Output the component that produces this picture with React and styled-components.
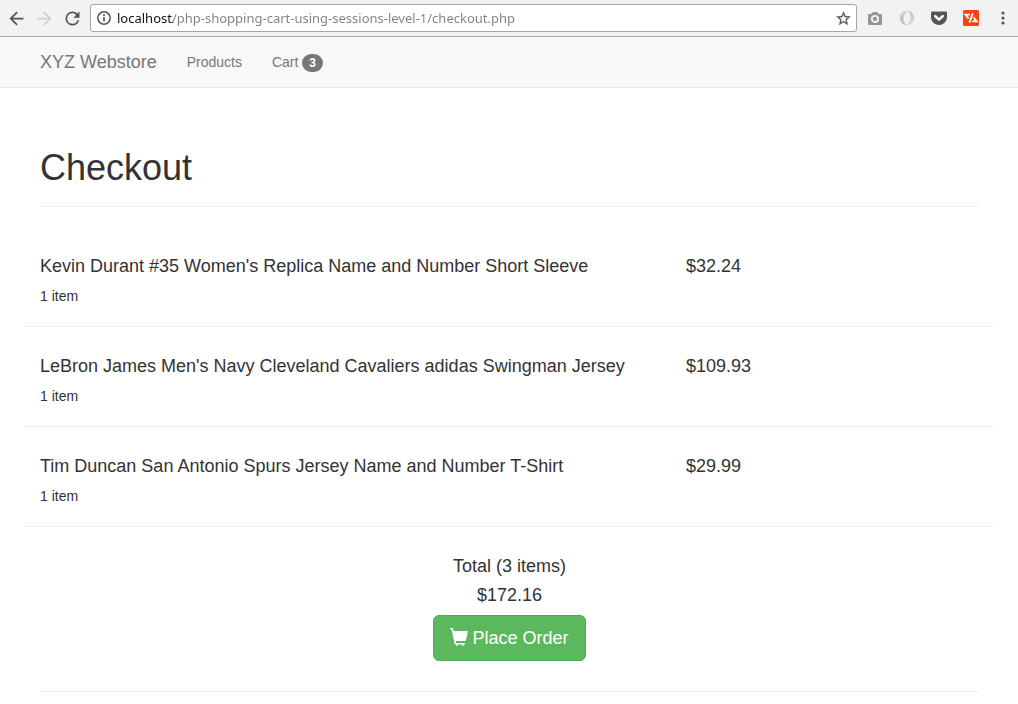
import React from "react";
import styled, { createGlobalStyle } from "styled-components";

const GlobalStyle = createGlobalStyle`
  * { box-sizing: border-box; }
  body {
    margin: 0;
    background: #fff;
    color: #333;
    font: 14px/20px "Liberation Sans", Arial, sans-serif;
  }
`;

const Toolbar = styled.div`
  display: flex;
  align-items: center;
  height: 37px;
  padding-left: 2px;
  background: #f2f2f2;
  border-bottom: 1px solid #a9a9a9;
`;

const ToolButton = styled.button`
  display: flex;
  align-items: center;
  justify-content: center;
  flex: none;
  width: ${(p) => p.$width}px;
  height: 28px;
  padding: 0;
  border: 0;
  background: none;
  color: ${(p) => p.$color || "#555"};
`;

const AddressBar = styled.div`
  display: flex;
  align-items: center;
  gap: 6px;
  flex: 1;
  min-width: 0;
  height: 28px;
  margin: 0 2px 0 4px;
  padding-left: 6px;
  background: #fff;
  border: 1px solid #a6a6a6;
  border-radius: 3px;
  color: #555;
`;

const AddressInput = styled.input`
  flex: 1;
  min-width: 0;
  height: 20px;
  padding: 0;
  border: 0;
  outline: 0;
  font: 13px/20px "Noto Sans", "Open Sans", sans-serif;
  color: #808080;
  background: linear-gradient(90deg, #111 56px, #808080 56px);
  background-clip: text;
  -webkit-background-clip: text;
  -webkit-text-fill-color: transparent;
`;

const Navbar = styled.nav`
  height: 51px;
  padding: 0 24px 0 25px;
  background: #f8f8f8;
  border-bottom: 1px solid #e7e7e7;
  display: flex;
`;

const NavLink = styled.a`
  padding: 15px;
  color: #777;
  text-decoration: none;
  font-size: ${(p) => (p.$brand ? 18 : 14)}px;
  line-height: 20px;
`;

const Badge = styled.span`
  display: inline-block;
  min-width: 10px;
  padding: 3px 7px;
  border-radius: 10px;
  background: #777;
  color: #fff;
  font-size: 12px;
  font-weight: 700;
  line-height: 12px;
  text-align: center;
  vertical-align: middle;
`;

const Container = styled.main`
  padding: 0 24px 0 25px;
`;

const PageHeader = styled.header`
  margin: 60px 15px 20px;
  padding-bottom: 18px;
  border-bottom: 1px solid #eee;
`;

const Title = styled.h1`
  margin: 0;
  font-size: 36px;
  font-weight: 400;
  line-height: 40px;
`;

const ItemList = styled.ul`
  margin: 0;
  padding: 0;
  list-style: none;
`;

const ItemRow = styled.li`
  display: grid;
  grid-template-columns: 2fr 1fr;
  padding: 29px 0 20px;
  border-bottom: 1px solid #eee;
`;

const Cell = styled.div`
  padding: 0 15px;
`;

const Heading = styled.h2`
  margin: 0 0 ${(p) => p.$gap || 10}px;
  font-size: 18px;
  font-weight: 400;
  line-height: 20px;
`;

const Quantity = styled.p`
  margin: 0;
`;

const Summary = styled.section`
  display: flex;
  flex-direction: column;
  align-items: center;
  margin: 0 15px;
  padding: 29px 0 30px;
  border-bottom: 1px solid #eee;
`;

const OrderButton = styled.button`
  display: flex;
  align-items: center;
  gap: 4px;
  padding: 10px 16px;
  border: 1px solid #4cae4c;
  border-radius: 6px;
  background: #5cb85c;
  color: #fff;
  font: 18px/24px "Liberation Sans", Arial, sans-serif;
`;

const Material = ({ d, size = 21, bold = 0 }) => (
  <svg width={size} height={size} viewBox="0 0 24 24" fill="currentColor" stroke="currentColor" strokeWidth={bold} aria-hidden="true">
    <path d={d} />
  </svg>
);

const BACK = "M20 11H7.83l5.59-5.59L12 4l-8 8 8 8 1.41-1.41L7.83 13H20v-2z";
const FORWARD = "M12 4l-1.41 1.41L16.17 11H4v2h12.17l-5.58 5.59L12 20l8-8z";
const RELOAD = "M17.65 6.35A7.96 7.96 0 0 0 12 4a8 8 0 1 0 7.73 10h-2.08A6 6 0 1 1 12 6c1.66 0 3.14.69 4.22 1.78L13 11h7V4l-2.35 2.35z";
const STAR = "M22 9.24l-7.19-.62L12 2 9.19 8.63 2 9.24l5.46 4.73L5.82 21 12 17.27 18.18 21l-1.63-7.03L22 9.24zM12 15.4l-3.76 2.27 1-4.28-3.32-2.88 4.38-.38L12 6.1l1.71 4.04 4.38.38-3.32 2.88 1 4.28L12 15.4z";

const InfoIcon = () => (
  <svg width="14" height="14" viewBox="0 0 14 14" fill="none" aria-hidden="true">
    <circle cx="7" cy="7" r="6.2" stroke="currentColor" strokeWidth="1.5" />
    <path d="M7 6v4.5M7 3.3v1.6" stroke="currentColor" strokeWidth="1.7" />
  </svg>
);

const CameraIcon = () => (
  <svg width="16" height="16" viewBox="0 0 16 16" aria-hidden="true">
    <path fill="#959595" d="M2 4h2.5V3h1V2h5v1h1v1H14a1 1 0 0 1 1 1v9a1 1 0 0 1-1 1H2a1 1 0 0 1-1-1V5a1 1 0 0 1 1-1z" />
    <circle cx="8" cy="9" r="3.1" fill="#959595" stroke="#f4f4f4" strokeWidth="1.9" />
  </svg>
);

const SwirlIcon = () => (
  <svg width="16" height="16" viewBox="0 0 16 16" aria-hidden="true">
    <path fill="#d0d0d0" d="M9 .8C4.500.500.800 3.500.600 7.500c-.200 3.200 1.600 6 4.600 7.300 1 .3 1.800.2 2.300-.100C5.500 12.800 4.600 10.800 4.800 8.300 5 5.200 6.500 2.800 9 .8z" />
    <path fill="#dcdcdc" d="M7 15.200c4.500.3 8.200-2.700 8.400-6.700.2-3.200-1.600-6-4.600-7.300-1-.3-1.800-.2-2.300.1 2 1.900 2.900 3.900 2.700 6.400-.2 3.100-1.700 5.500-4.200 7.500z" />
    <path fill="none" stroke="#b4b4b4" strokeWidth="1" d="M10.300 1.400c2.800 1.800 3.600 5.300 2.400 8.800M5.700 14.600c-2.800-1.800-3.600-5.300-2.400-8.800" />
  </svg>
);

const PocketIcon = () => (
  <svg width="16" height="16" viewBox="0 0 16 16" aria-hidden="true">
    <path fill="#555" d="M1 1.500h14a1 1 0 0 1 1 1v5a8 7.500 0 0 1-16 0v-5a1 1 0 0 1 1-1z" />
    <path fill="none" stroke="#f8f8f8" strokeWidth="2.600" strokeLinecap="round" strokeLinejoin="round" d="M4.300 6.200L8 9.600l3.700-3.400" />
  </svg>
);

const CodeIcon = () => (
  <svg width="16" height="16" viewBox="0 0 16 16" aria-hidden="true">
    <rect width="16" height="16" rx="1.500" fill="#f8430c" />
    <path fill="none" stroke="#fff" strokeWidth="1.800" d="M6.800 4.600H2.300l3.400 4M9.800 3.200L6.400 12.600M10.500 7.400l3.300 4H9.200" />
  </svg>
);

const DotsIcon = () => (
  <svg width="4" height="14" viewBox="0 0 4 14" fill="currentColor" aria-hidden="true">
    <circle cx="2" cy="2" r="1.600" />
    <circle cx="2" cy="7" r="1.600" />
    <circle cx="2" cy="12" r="1.600" />
  </svg>
);

const CartIcon = () => (
  <svg width="18" height="20" viewBox="0 0 1200 1333" fill="currentColor" aria-hidden="true">
    <path
      transform="matrix(1 0 0 -1 0 1200)"
      d="M56 1200h94q17 0 31-11t18-27l38-162h896q24 0 39-18.500t10-42.500l-114-541q-5-21-27-42.500t-55-21.500h-603l32-134h535q21 0 35.500-15t14.500-35t-14.500-35t-35.500-15h-50v-50q0-21-15-35.500t-35-14.500t-35 14.500t-15 35.500v50h-300v-50q0-21-15-35.500t-35-14.500t-35 14.500t-15 35.500v50h-31q-18 0-32.500 10t-20.500 19l-5 10l-201 961h-54q-20 0-35 14.500t-15 35.500t15 35.500t35 14.500z"
    />
  </svg>
);

const items = [
  { name: "Kevin Durant #35 Women's Replica Name and Number Short Sleeve", price: "$32.24" },
  { name: "LeBron James Men's Navy Cleveland Cavaliers adidas Swingman Jersey", price: "$109.93" },
  { name: "Tim Duncan San Antonio Spurs Jersey Name and Number T-Shirt", price: "$29.99" },
];

export default function App() {
  return (
    <>
      <GlobalStyle />
      <Toolbar>
        <ToolButton $width={28} aria-label="Back"><Material d={BACK} /></ToolButton>
        <ToolButton $width={28} $color="#d0d0d0" aria-label="Forward"><Material d={FORWARD} /></ToolButton>
        <ToolButton $width={28} aria-label="Reload"><Material d={RELOAD} /></ToolButton>
        <AddressBar>
          <InfoIcon />
          <AddressInput
            type="text"
            aria-label="Address"
            defaultValue="localhost/php-shopping-cart-using-sessions-level-1/checkout.php"
          />
          <ToolButton $width={26} aria-label="Bookmark"><Material d={STAR} size={17} bold={0.3} /></ToolButton>
        </AddressBar>
        <ToolButton $width={32} aria-label="Screenshot"><CameraIcon /></ToolButton>
        <ToolButton $width={32} aria-label="Extension"><SwirlIcon /></ToolButton>
        <ToolButton $width={32} aria-label="Pocket"><PocketIcon /></ToolButton>
        <ToolButton $width={32} aria-label="Code tools"><CodeIcon /></ToolButton>
        <ToolButton $width={31} aria-label="Menu"><DotsIcon /></ToolButton>
      </Toolbar>
      <Navbar>
        <NavLink href="#" $brand>XYZ Webstore</NavLink>
        <NavLink href="#products">Products</NavLink>
        <NavLink href="#cart">Cart <Badge>3</Badge></NavLink>
      </Navbar>
      <Container>
        <PageHeader>
          <Title>Checkout</Title>
        </PageHeader>
        <ItemList>
          {items.map((item) => (
            <ItemRow key={item.name}>
              <Cell>
                <Heading>{item.name}</Heading>
                <Quantity>1 item</Quantity>
              </Cell>
              <Cell>
                <Heading as="p">{item.price}</Heading>
              </Cell>
            </ItemRow>
          ))}
        </ItemList>
        <Summary>
          <Heading $gap={9}>Total (3 items)</Heading>
          <Heading as="p">{"$172.16"}</Heading>
          <OrderButton type="button">
            <CartIcon />
            Place Order
          </OrderButton>
        </Summary>
      </Container>
    </>
  );
}
